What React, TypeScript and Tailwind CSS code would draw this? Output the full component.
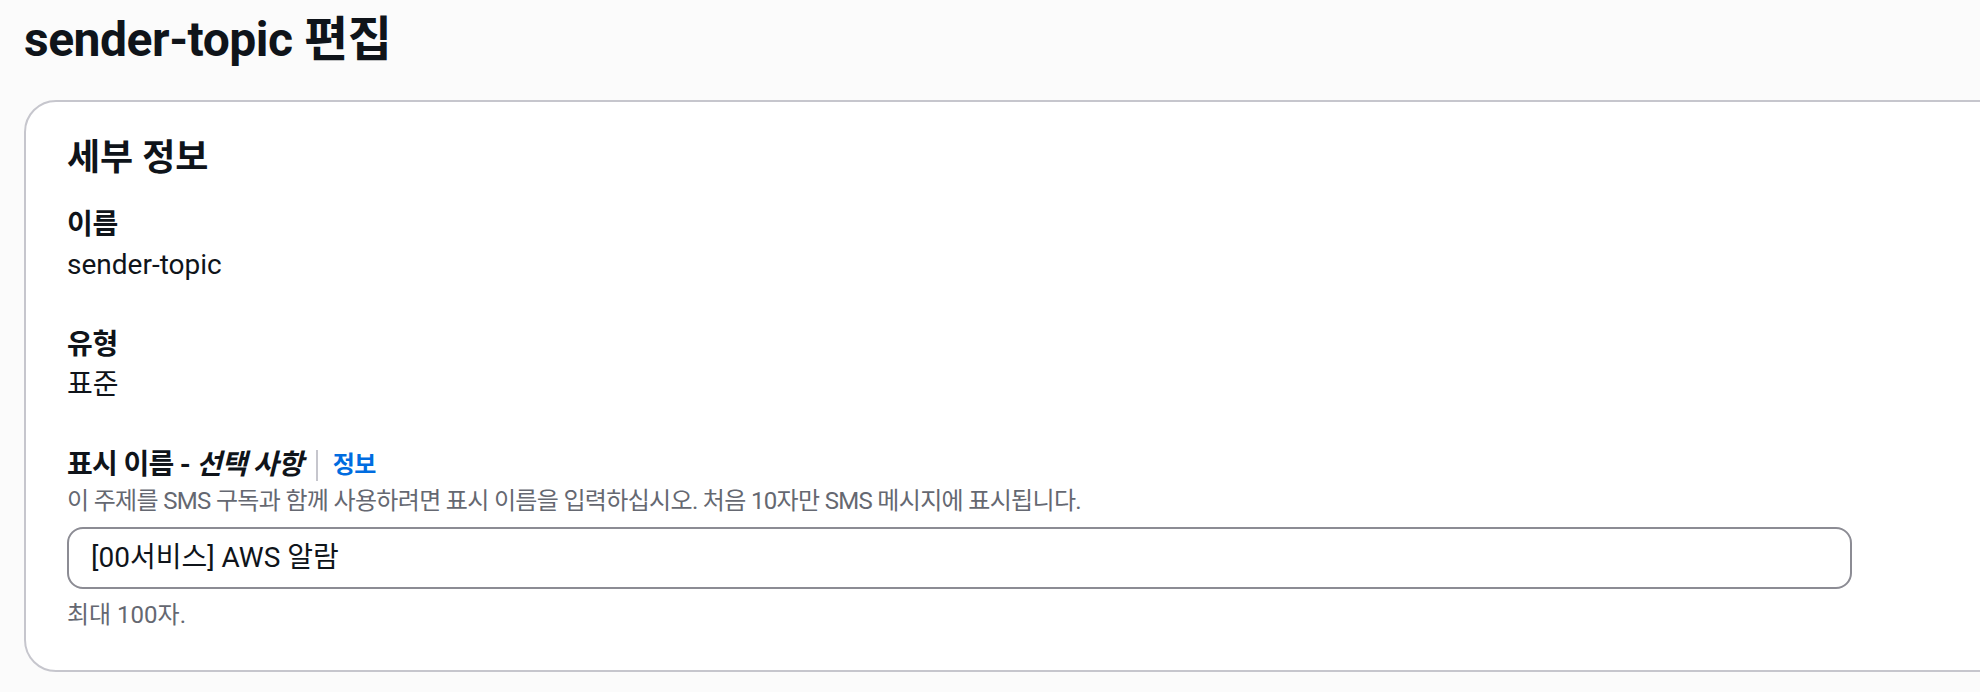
import React from 'react';

const Field = ({ label, value }: { label: string; value: string }) => (
    <div className="flex flex-col">
        <div className="text-[28px] leading-[40px] font-bold tracking-[-0.01em]">{label}</div>
        <div className="text-[28px] leading-[40px]">{value}</div>
    </div>
);

const App = () => {
    return (
        <div className="h-[692px] overflow-hidden bg-[#fbfbfb] pl-6 text-[#0f141a] font-['Roboto','Noto_Sans_CJK_KR',sans-serif]">
            <h1 className="pt-[10px] text-[48px] leading-[60px] font-bold tracking-[-0.01em]">sender-topic 편집</h1>

            <div className="mt-[30px] w-[2000px] rounded-[32px] border-2 border-[#c6c6cd] bg-white px-[41px] pt-[34px] pb-[39px]">
                <h2 className="text-[36px] leading-[44px] font-bold">세부 정보</h2>

                <div className="mt-[25px] flex flex-col gap-[40px]">
                    <Field label="이름" value="sender-topic" />
                    <Field label="유형" value="표준" />

                    <div className="flex flex-col">
                        <div className="flex items-center text-[28px] leading-[40px] font-bold">
                            <span className="tracking-[-0.025em]">
                                표시 이름 - <i>선택 사항</i>
                            </span>
                            <span className="ml-[13px] h-[31px] w-[2px] bg-[#c6c6cd]" />
                            <a className="ml-[15px] text-[24px] tracking-[-0.03em] text-[#006ce0]">정보</a>
                        </div>
                        <p className="text-[24px] leading-[32px] tracking-[-0.028em] text-[#656871]">
                            이 주제를 SMS 구독과 함께 사용하려면 표시 이름을 입력하십시오. 처음 10자만 SMS 메시지에 표시됩니다.
                        </p>
                        <div className="mt-[10px] flex h-[62px] w-[1785px] items-center rounded-[16px] border-2 border-[#8c8c94] bg-white pl-[22px] text-[28px]">
                            [00서비스] AWS 알람
                        </div>
                        <p className="mt-[10px] text-[24px] leading-[32px] text-[#656871]">최대 100자.</p>
                    </div>
                </div>
            </div>
        </div>
    );
};

export default App;
